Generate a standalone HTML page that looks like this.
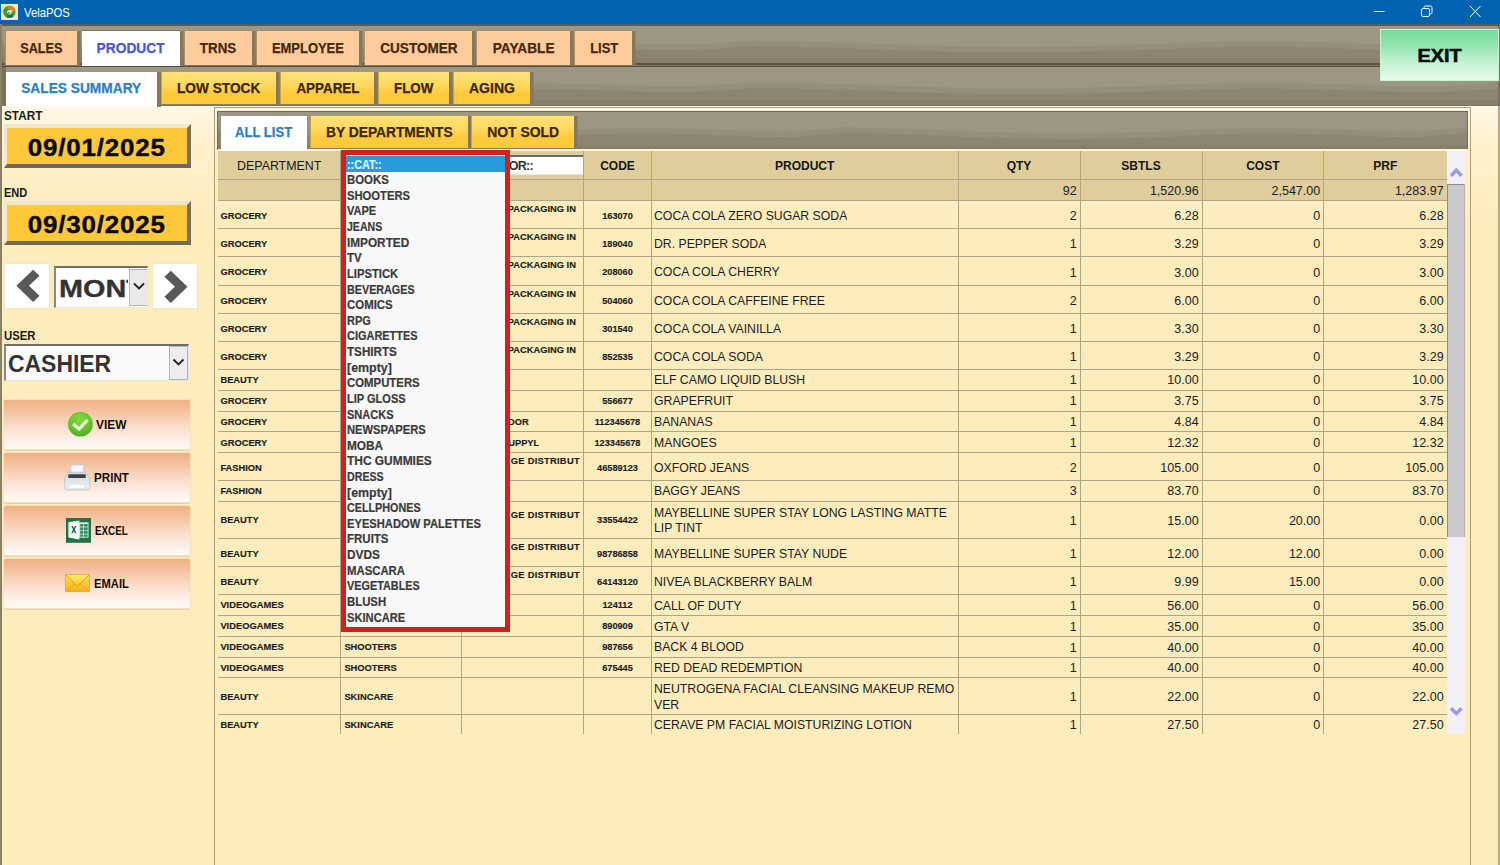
<!DOCTYPE html><html><head><meta charset="utf-8"><title>VelaPOS</title><style>
*{box-sizing:border-box;margin:0;padding:0}
html,body{width:1500px;height:865px;overflow:hidden;background:#FDECBC;font-family:"Liberation Sans",sans-serif;}
.a{position:absolute}
.sg{display:inline-block;font-weight:bold;-webkit-text-stroke:.25px currentColor;transform-origin:50% 50%;white-space:nowrap}
#title{left:0;top:0;width:1500px;height:24px;background:#0063B1}
.strip{background:#9D9684;overflow:hidden}
.tab{position:absolute;text-align:center;font-weight:bold;white-space:nowrap}
.t1{background:#FDCB9C;color:#47280A;box-shadow:3.500px 0 0 #86795B, 0 -1px 0 #A08E62, -1px 0 0 #A9966A;font-size:14px;line-height:34px;top:31px;height:34px}
.t2{background:linear-gradient(#FFE27C 0%,#FFD95F 40%,#FFCC40 65%,#FFC838 100%);color:#3C2606;box-shadow:3.500px 0 0 #86795B, 0 -1px 0 #B79C4E, -1px 0 0 #C9A445;font-size:14px}
.lbl{font-weight:bold;font-size:12px;color:#1a1a1a;white-space:nowrap;transform-origin:0 50%;transform:scaleX(.98)}
.datebtn{left:3.600px;width:187.500px;height:43.800px;background:#FFC83A;border-top:4px solid #EFE6D2;border-left:3.500px solid #F3E9CC;border-right:4.500px solid #787060;border-bottom:4px solid #706954;text-align:center;font-weight:bold;font-size:23.600px;line-height:41px;color:#0a0a0a;white-space:nowrap}
.datebtn span{display:inline-block;transform:scaleX(1.10);letter-spacing:.75px;-webkit-text-stroke:.4px #0a0a0a}
.obtn{left:4px;width:185.500px;height:49px;background:linear-gradient(#EFB083 0%,#F5C4A3 25%,#FAE0CF 58%,#FEF4EE 88%,#FFF9F4 100%);border-radius:1.500px;box-shadow:0 0 0 1px #F3E2BE, 0 2px 0 0 #E6D5AA}
.obtn .tx{position:absolute;top:0;line-height:50px;font-weight:bold;font-size:12.5px;color:#111;transform-origin:0 50%;transform:scaleX(.92);white-space:nowrap}
.cell{position:absolute;overflow:hidden;white-space:nowrap;color:#1c1c1c}
.b7{font-weight:bold;font-size:9.6px}
.r9{font-size:12.25px}
.num{text-align:right;font-size:12.5px}
.hl{position:absolute;height:1px;background:#AEA487;left:218px;width:1229px}
.vl{position:absolute;width:1px;background:#AEA487;top:151px;height:583px}
.dd{position:absolute;left:346.800px;font-weight:bold;-webkit-text-stroke:.2px currentColor;font-size:12px;color:#3b3b3b;white-space:nowrap;line-height:16px;height:16px}
</style></head><body>
<div class="a" id="title"></div>
<svg class="a" style="left:1px;top:4px" width="17" height="16" viewBox="0 0 17 16">
<rect x="0" y="0" width="17" height="16" fill="#F4E8BC"/>
<circle cx="8.300" cy="7.900" r="6.200" fill="#3F9A3B"/>
<path d="M6.500 2.000A6.200 6.200 0 0 1 14.400 6.800L10.800 8.600A2.800 2.800 0 0 0 7.000 5.200z" fill="#E87D25"/>
<path d="M5.800 13.500A6.200 6.200 0 0 0 12.500 12.400L10.300 9.800A2.600 2.600 0 0 1 6.800 10.600z" fill="#1E6E68"/>
<path d="M6.000 8.700a2.400 2.400 0 0 1 3.600-2.300l.9-1 .5 3.200-3.100-.2.900-.9a1.300 1.300 0 0 0-1.700 1.400z" fill="#F3F7EE"/>
<path d="M10.600 8.000a2.400 2.400 0 0 1-3.000 2.400l.4-1.000a1.300 1.300 0 0 0 1.500-1.300z" fill="#DCEFD8"/>
</svg>
<div class="a" style="left:23.500px;top:5px;font-size:12px;line-height:16px;color:#fff;transform-origin:0 50%;transform:scaleX(.94);white-space:nowrap">VelaPOS</div>
<svg class="a" style="left:1360px;top:0" width="140" height="24" viewBox="0 0 140 24" fill="none" stroke="#fff" stroke-width="1">
<path d="M14 11.5h10.5"/>
<rect x="61.5" y="8.5" width="8" height="8" rx="1.5"/><path d="M64 8.3v-.8a1.5 1.5 0 0 1 1.5-1.5h5a1.5 1.5 0 0 1 1.500 1.5v5a1.5 1.5 0 0 1-1.5 1.5h-.9"/>
<path d="M110 6l10.500 11M120.500 6l-10.500 11"/>
</svg>
<div class="a" style="left:0;top:24px;width:1500px;height:43px;background:#6B6452"></div>
<div class="a" style="left:0;top:24px;width:1500px;height:2px;background:#5C5A53"></div>
<div class="a strip" style="left:2px;top:26px;width:1498px;height:37px"><svg class="a" style="left:0;top:0" width="1498" height="37" viewBox="0 0 200 100" preserveAspectRatio="none"><path d="M0 40 C 15 42, 25 60, 40 56 S 60 38, 72 42 S 90 60, 100 40 C 115 42, 125 60, 140 56 S 160 38, 172 42 S 190 60, 200 40 L200 100 L0 100Z" fill="#958E7A"/><path d="M0 55 C 15 57, 25 75, 40 71 S 60 53, 72 57 S 90 75, 100 55 C 115 57, 125 75, 140 71 S 160 53, 172 57 S 190 75, 200 55 L200 100 L0 100Z" fill="#8C8571"/><rect x="0" y="88" width="200" height="12" fill="#857C67" fill-opacity=".6"/></svg></div>
<div class="a" style="left:2px;top:63px;width:1498px;height:2px;background:#5C5440"></div>
<div class="a" style="left:2px;top:65px;width:1498px;height:1px;background:#807862"></div>
<div class="a" style="left:2px;top:66px;width:1498px;height:1px;background:#554D3A"></div>
<div class="a strip" style="left:2px;top:67px;width:1498px;height:38px"><svg class="a" style="left:0;top:0" width="1498" height="38" viewBox="0 0 200 100" preserveAspectRatio="none"><path d="M0 40 C 15 42, 25 60, 40 56 S 60 38, 72 42 S 90 60, 100 40 C 115 42, 125 60, 140 56 S 160 38, 172 42 S 190 60, 200 40 L200 100 L0 100Z" fill="#958E7A"/><path d="M0 55 C 15 57, 25 75, 40 71 S 60 53, 72 57 S 90 75, 100 55 C 115 57, 125 75, 140 71 S 160 53, 172 57 S 190 75, 200 55 L200 100 L0 100Z" fill="#8C8571"/><rect x="0" y="88" width="200" height="12" fill="#857C67" fill-opacity=".6"/></svg></div>
<div class="a" style="left:0;top:24px;width:2px;height:841px;background:#8A7F69"></div>
<div class="a" style="left:2px;top:67px;width:4px;height:38px;background:#7A705B"></div>
<div class="tab t1" style="left:5.6px;width:71.4px"><span class="sg" style="transform:scaleX(0.908)">SALES</span></div>
<div class="tab" style="left:82.0px;width:98.0px;top:30.5px;height:35.5px;line-height:35px;background:#fff;color:#4A58C8;font-size:14px;box-shadow:3.500px 0 0 #86795B, 0 -1px 0 #7F7560"><span class="sg" style="transform:scaleX(0.982)">PRODUCT</span></div>
<div class="tab t1" style="left:185.0px;width:67.0px"><span class="sg" style="transform:scaleX(0.955)">TRNS</span></div>
<div class="tab t1" style="left:257.0px;width:102.0px"><span class="sg" style="transform:scaleX(0.926)">EMPLOYEE</span></div>
<div class="tab t1" style="left:365.0px;width:107.0px"><span class="sg" style="transform:scaleX(0.969)">CUSTOMER</span></div>
<div class="tab t1" style="left:477.0px;width:93.0px"><span class="sg" style="transform:scaleX(0.976)">PAYABLE</span></div>
<div class="tab t1" style="left:575.0px;width:57.4px"><span class="sg" style="transform:scaleX(0.923)">LIST</span></div>
<div class="tab" style="left:6.4px;width:150.6px;top:71.6px;height:35px;line-height:32.5px;background:#fff;color:#2D7DC3;font-size:14px;z-index:2;box-shadow:4px 0 0 #86795B"><span class="sg" style="transform:scaleX(0.981)">SALES SUMMARY</span></div>
<div class="tab t2" style="left:162.0px;width:114.0px;top:72.4px;height:32px;line-height:32px"><span class="sg" style="transform:scaleX(0.978)">LOW STOCK</span></div>
<div class="tab t2" style="left:281.0px;width:93.0px;top:72.4px;height:32px;line-height:32px"><span class="sg" style="transform:scaleX(0.957)">APPAREL</span></div>
<div class="tab t2" style="left:379.0px;width:70.0px;top:72.4px;height:32px;line-height:32px"><span class="sg" style="transform:scaleX(0.951)">FLOW</span></div>
<div class="tab t2" style="left:454.0px;width:76.0px;top:72.4px;height:32px;line-height:32px"><span class="sg" style="transform:scaleX(1.002)">AGING</span></div>
<div class="a" style="left:1380px;top:29px;width:119px;height:52px;z-index:3;background:linear-gradient(#74DD9B 0%,#92E4B0 30%,#C4F2D2 65%,#E8FBEC 100%);border:1.500px solid #C9F1D3;text-align:center;line-height:51px;font-size:18.500px;font-weight:bold;color:#0b0b0b"><span class="sg" style="transform:scaleX(1.07);-webkit-text-stroke:.6px #0b0b0b">EXIT</span></div>
<div class="a" style="left:2px;top:105px;width:1498px;height:1px;background:#7D735E"></div>
<div class="a" style="left:2px;top:106px;width:1498px;height:760px;background:linear-gradient(#FFF8E6 0px,#FEF0CB 40px,#FDECBC 120px)"></div>
<div class="a" style="left:214px;top:107px;width:1px;height:758px;background:#A99C7A"></div>
<div class="a" style="left:1470px;top:107px;width:1px;height:758px;background:#A99C7A"></div>
<div class="a" style="left:214px;top:107px;width:1257px;height:1px;background:#A8A080"></div>
<div class="a" style="left:215px;top:108px;width:1255px;height:2.500px;background:#FFF8E4"></div>
<div class="a" style="left:1498px;top:26px;width:2px;height:80px;background:#7A715C"></div>
<div class="a" style="left:1498px;top:106px;width:2px;height:759px;background:#B9AA7A"></div>
<div class="a lbl" style="left:4px;top:108px;line-height:16px">START</div>
<div class="a datebtn" style="top:123.900px"><span>09/01/2025</span></div>
<div class="a lbl" style="left:3.600px;top:185px;line-height:16px;transform:scaleX(.92)">END</div>
<div class="a datebtn" style="top:200.900px"><span>09/30/2025</span></div>
<div class="a" style="left:4.4px;top:263px;width:46px;height:46px;background:#fff;border:1px solid #F3E7C8"></div>
<svg class="a" style="left:4.400px;top:263px" width="46" height="46" viewBox="0 0 46 46"><path d="M12.400 22.800L29.100 6.700 35.500 12.800 25 22.800 35.500 32.800 29.100 38.900z" fill="#595959"/></svg>
<div class="a" style="left:54.4px;top:266.4px;width:94px;height:41.6px;background:#fff;border-top:2px solid #6e6e6e;border-left:2px solid #8a8a8a;border-right:1px solid #e6e6e6;border-bottom:1px solid #e6e6e6;overflow:hidden"><div style="position:absolute;left:2.600px;top:3px;font-size:24px;line-height:36px;font-weight:bold;color:#333;-webkit-text-stroke:.35px #333;white-space:nowrap;transform-origin:0 50%;transform:scaleX(1.2)">MONTH</div><div style="position:absolute;left:72px;top:0;width:21px;height:39px;background:#fff"></div><div style="position:absolute;left:72.500px;top:0.5px;width:19.500px;height:37.500px;background:#E9E9E9;border:1px solid #B4B4B4"></div><svg style="position:absolute;left:72.500px;top:0" width="20" height="38" viewBox="0 0 20 38"><path d="M5 15.500l5 5 5-5" fill="none" stroke="#222" stroke-width="1.800"/></svg></div>
<div class="a" style="left:152.4px;top:263px;width:46px;height:46px;background:#fff;border:1px solid #F3E7C8"></div>
<svg class="a" style="left:152.400px;top:263.800px" width="46" height="46" viewBox="0 0 46 46"><path d="M35.500 22.800L18.800 6.700 12.400 12.800 22.900 22.800 12.400 32.800 18.800 38.900z" fill="#595959"/></svg>
<div class="a lbl" style="left:3.600px;top:328px;line-height:16px;transform:scaleX(.945)">USER</div>
<div class="a" style="left:3.6px;top:343.6px;width:185.400px;height:37.400px;background:#FAFAFA;border-top:2px solid #6e6e6e;border-left:2px solid #8a8a8a;border-right:1px solid #e6e6e6;border-bottom:1px solid #e6e6e6;overflow:hidden"><div style="position:absolute;left:2px;top:1px;font-size:24px;line-height:34px;font-weight:bold;color:#333;white-space:nowrap;transform-origin:0 50%;transform:scaleX(.955)">CASHIER</div><div style="position:absolute;left:163.400px;top:0px;width:19px;height:34.500px;background:#EDEDED;border:1px solid #B4B4B4"></div><svg style="position:absolute;left:163.400px;top:0" width="19" height="34" viewBox="0 0 19 34"><path d="M4.500 13.500l5 5 5-5" fill="none" stroke="#222" stroke-width="1.800"/></svg></div>
<div class="a obtn" style="top:399.8px"></div>
<div class="a" style="left:96.3px;top:419.00px;font-size:12px;line-height:12px;font-weight:bold;color:#140c08;white-space:nowrap;transform-origin:0 50%;transform:scaleX(0.994)">VIEW</div>
<div class="a obtn" style="top:453.0px"></div>
<div class="a" style="left:93.6px;top:472.00px;font-size:12px;line-height:12px;font-weight:bold;color:#140c08;white-space:nowrap;transform-origin:0 50%;transform:scaleX(0.969)">PRINT</div>
<div class="a obtn" style="top:506.1px"></div>
<div class="a" style="left:94.8px;top:525.00px;font-size:12px;line-height:12px;font-weight:bold;color:#140c08;white-space:nowrap;transform-origin:0 50%;transform:scaleX(0.817)">EXCEL</div>
<div class="a obtn" style="top:559.3px"></div>
<div class="a" style="left:93.6px;top:578.00px;font-size:12px;line-height:12px;font-weight:bold;color:#140c08;white-space:nowrap;transform-origin:0 50%;transform:scaleX(0.935)">EMAIL</div>
<svg class="a" style="left:66px;top:410px" width="29" height="29" viewBox="0 0 29 29">
<defs><radialGradient id="gv" cx=".45" cy=".3" r=".75"><stop offset="0" stop-color="#84DA3C"/><stop offset=".65" stop-color="#62C02C"/><stop offset="1" stop-color="#4CA524"/></radialGradient></defs>
<circle cx="14.400" cy="14.200" r="12.400" fill="url(#gv)"/>
<path d="M7.200 14.000l5.800 5.000 8.600-9.200" fill="none" stroke="#ECFCD8" stroke-width="3.200" stroke-linecap="butt" stroke-linejoin="miter"/></svg>
<svg class="a" style="left:64px;top:464px" width="27" height="27" viewBox="0 0 27 27">
<defs><linearGradient id="gp" x1="0" y1="0" x2="0" y2="1"><stop offset="0" stop-color="#D4DAE0"/><stop offset="1" stop-color="#EEF0F3"/></linearGradient></defs>
<path d="M6.800 10.500V2.500l1.800-1.600h10.900v9.600z" fill="#F3F6FA" stroke="#C6CCD4" stroke-width=".7"/>
<path d="M4.500 8.200h17.200l3 4.500a3 3 0 0 1 1.200 2.400v8.300a2.400 2.400 0 0 1-2.400 2.400H3a2.400 2.400 0 0 1-2.400-2.400v-8.300a3 3 0 0 1 1.200-2.400z" fill="url(#gp)" stroke="#B4BAC2" stroke-width=".7"/>
<rect x="4.200" y="10.200" width="17.600" height="3.900" rx="1.200" fill="#3A4046"/>
<rect x="5" y="20.300" width="16" height="4.300" rx=".8" fill="#FBFCFD" stroke="#D5D9DE" stroke-width=".5"/></svg>
<svg class="a" style="left:65.800px;top:518.100px" width="25.200" height="24.800" viewBox="0 0 25.200 24.800">
<rect x="0" y="0" width="25.200" height="24.800" fill="#217346"/>
<rect x="13.200" y="4.300" width="9.300" height="15.400" fill="#D6F3E4"/>
<g fill="#3C8C62"><rect x="14.100" y="6.000" width="3.000" height="2.600"/><rect x="17.800" y="6.000" width="3.900" height="2.600"/><rect x="14.100" y="9.300" width="3.000" height="2.900"/><rect x="17.800" y="9.300" width="3.900" height="2.900"/><rect x="14.100" y="12.900" width="3.000" height="2.900"/><rect x="17.800" y="12.900" width="3.900" height="2.900"/><rect x="14.100" y="16.500" width="3.000" height="2.300"/><rect x="17.800" y="16.500" width="3.900" height="2.300"/></g>
<path d="M2.400 4.300L13.400 2.600V21.400L2.400 19.400z" fill="#F4FBF7"/>
<path d="M5.300 8.000h1.700l.9 2.200 1-2.200h1.600l-1.750 3.600 1.850 3.700H9.000l-1.100-2.400-1.050 2.400H5.200l1.850-3.700z" fill="#1E6B41"/></svg>
<svg class="a" style="left:64.600px;top:574.100px" width="25" height="18.200" viewBox="0 0 25 18.200">
<defs><linearGradient id="ge" x1="0" y1="0" x2="0" y2="1"><stop offset="0" stop-color="#FFE352"/><stop offset="1" stop-color="#F6B01E"/></linearGradient>
<linearGradient id="gf" x1="0" y1="0" x2="0" y2="1"><stop offset="0" stop-color="#FFEE6A"/><stop offset="1" stop-color="#FBC42C"/></linearGradient></defs>
<rect x=".4" y=".4" width="24.200" height="17.400" rx="1.200" fill="url(#ge)" stroke="#E2A21C" stroke-width=".8"/>
<path d="M1.200 17.200L10.500 9.300M23.800 17.200L14.500 9.300" stroke="#E5A31A" stroke-width=".9" fill="none"/>
<path d="M.8 1.000L12.300 12.300 23.900 1.000z" fill="url(#gf)"/>
<path d="M.8 1.000L12.300 12.300 23.900 1.000" fill="none" stroke="#DF9C16" stroke-width="1"/></svg>
<div class="a" style="left:216px;top:109px;width:1254px;height:1px;background:#fff8e0"></div>
<div class="a" style="left:217px;top:110.500px;width:1251.400px;height:39px;background:#6F6755"></div>
<div class="a strip" style="left:218.300px;top:111.800px;width:1249.100px;height:37.400px"><svg class="a" style="left:0;top:0" width="1250" height="38" viewBox="0 0 200 100" preserveAspectRatio="none"><path d="M0 40 C 15 42, 25 60, 40 56 S 60 38, 72 42 S 90 60, 100 40 C 115 42, 125 60, 140 56 S 160 38, 172 42 S 190 60, 200 40 L200 100 L0 100Z" fill="#958E7A"/><path d="M0 55 C 15 57, 25 75, 40 71 S 60 53, 72 57 S 90 75, 100 55 C 115 57, 125 75, 140 71 S 160 53, 172 57 S 190 75, 200 55 L200 100 L0 100Z" fill="#8C8571"/><rect x="0" y="88" width="200" height="12" fill="#857C67" fill-opacity=".6"/></svg></div>
<div class="a" style="left:218px;top:149px;width:1250px;height:2px;background:#FFF6DA"></div>
<div class="tab" style="left:221px;width:86px;top:116px;height:35px;line-height:33px;background:#fff;color:#2D7DC3;font-size:14px"><span class="sg" style="transform:scaleX(.932)">ALL LIST</span></div>
<div class="tab t2" style="left:311.0px;width:156.6px;top:116px;height:32px;line-height:32px"><span class="sg" style="transform:scaleX(0.984)">BY DEPARTMENTS</span></div>
<div class="tab t2" style="left:472.0px;width:102.0px;top:116px;height:32px;line-height:32px"><span class="sg" style="transform:scaleX(0.995)">NOT SOLD</span></div>
<div class="a" style="left:218px;top:151px;width:1229px;height:49.500px;background:#DFCE9B"></div>
<div class="cell" style="left:218.0px;width:122.4px;top:151px;height:28px;line-height:30.5px;text-align:center;font-size:12.4px;font-weight:normal;color:#161616">DEPARTMENT</div>
<div class="cell" style="left:583.6px;width:67.8px;top:151px;height:28px;line-height:30.5px;text-align:center;font-size:12px;font-weight:bold;color:#161616">CODE</div>
<div class="cell" style="left:651.4px;width:306.6px;top:151px;height:28px;line-height:30.5px;text-align:center;font-size:12px;font-weight:bold;color:#161616">PRODUCT</div>
<div class="cell" style="left:958.0px;width:122.0px;top:151px;height:28px;line-height:30.5px;text-align:center;font-size:12px;font-weight:bold;color:#161616">QTY</div>
<div class="cell" style="left:1080.0px;width:122.0px;top:151px;height:28px;line-height:30.5px;text-align:center;font-size:12px;font-weight:bold;color:#161616">SBTLS</div>
<div class="cell" style="left:1202.0px;width:121.6px;top:151px;height:28px;line-height:30.5px;text-align:center;font-size:12px;font-weight:bold;color:#161616">COST</div>
<div class="cell" style="left:1323.6px;width:123.4px;top:151px;height:28px;line-height:30.5px;text-align:center;font-size:12px;font-weight:bold;color:#161616">PRF</div>
<div class="a" style="left:463px;top:155px;width:120px;height:20px;background:#fff;border-top:2px solid #6b6b6b;border-left:1px solid #999;border-bottom:1px solid #e4e4e4"><div style="position:absolute;left:5.9px;top:0;line-height:18px;font-size:12.5px;font-weight:bold;color:#333;letter-spacing:-.7px;white-space:nowrap">::VENDOR::</div></div>
<div class="cell" style="left:958.00px;top:184.75px;font-size:12.5px;line-height:12.5px;height:15.0px;color:#1c1c1c;width:118.60px;text-align:right;">92</div>
<div class="cell" style="left:1080.00px;top:184.75px;font-size:12.5px;line-height:12.5px;height:15.0px;color:#1c1c1c;width:118.60px;text-align:right;">1,520.96</div>
<div class="cell" style="left:1202.00px;top:184.75px;font-size:12.5px;line-height:12.5px;height:15.0px;color:#1c1c1c;width:118.20px;text-align:right;">2,547.00</div>
<div class="cell" style="left:1323.60px;top:184.75px;font-size:12.5px;line-height:12.5px;height:15.0px;color:#1c1c1c;width:120.00px;text-align:right;">1,283.97</div>
<div class="cell" style="left:220.40px;top:212.34px;font-size:9.33px;line-height:9.33px;height:11.2px;color:#1c1c1c;font-weight:bold;-webkit-text-stroke:.15px #1c1c1c;">GROCERY</div>
<div class="cell" style="left:344.40px;top:212.34px;font-size:9.33px;line-height:9.33px;height:11.2px;color:#1c1c1c;font-weight:bold;-webkit-text-stroke:.15px #1c1c1c;">IMPORTED</div>
<div class="cell" style="left:507.70px;top:205.34px;font-size:9.33px;line-height:9.33px;height:11.2px;color:#1c1c1c;font-weight:bold;-webkit-text-stroke:.15px #1c1c1c;">PACKAGING IN</div>
<div class="cell" style="left:583.60px;top:212.40px;font-size:9.2px;line-height:9.2px;height:11.0px;color:#1c1c1c;font-weight:bold;-webkit-text-stroke:.15px #1c1c1c;width:67.80px;text-align:center;">163070</div>
<div class="cell" style="left:654.00px;top:209.88px;font-size:12.25px;line-height:12.25px;height:14.7px;color:#1c1c1c;">COCA COLA ZERO SUGAR SODA</div>
<div class="cell" style="left:958.00px;top:209.75px;font-size:12.5px;line-height:12.5px;height:15.0px;color:#1c1c1c;width:118.60px;text-align:right;">2</div>
<div class="cell" style="left:1080.00px;top:209.75px;font-size:12.5px;line-height:12.5px;height:15.0px;color:#1c1c1c;width:118.60px;text-align:right;">6.28</div>
<div class="cell" style="left:1202.00px;top:209.75px;font-size:12.5px;line-height:12.5px;height:15.0px;color:#1c1c1c;width:118.20px;text-align:right;">0</div>
<div class="cell" style="left:1323.60px;top:209.75px;font-size:12.5px;line-height:12.5px;height:15.0px;color:#1c1c1c;width:120.00px;text-align:right;">6.28</div>
<div class="cell" style="left:220.40px;top:240.34px;font-size:9.33px;line-height:9.33px;height:11.2px;color:#1c1c1c;font-weight:bold;-webkit-text-stroke:.15px #1c1c1c;">GROCERY</div>
<div class="cell" style="left:344.40px;top:240.34px;font-size:9.33px;line-height:9.33px;height:11.2px;color:#1c1c1c;font-weight:bold;-webkit-text-stroke:.15px #1c1c1c;">IMPORTED</div>
<div class="cell" style="left:507.70px;top:233.34px;font-size:9.33px;line-height:9.33px;height:11.2px;color:#1c1c1c;font-weight:bold;-webkit-text-stroke:.15px #1c1c1c;">PACKAGING IN</div>
<div class="cell" style="left:583.60px;top:240.40px;font-size:9.2px;line-height:9.2px;height:11.0px;color:#1c1c1c;font-weight:bold;-webkit-text-stroke:.15px #1c1c1c;width:67.80px;text-align:center;">189040</div>
<div class="cell" style="left:654.00px;top:237.88px;font-size:12.25px;line-height:12.25px;height:14.7px;color:#1c1c1c;">DR. PEPPER SODA</div>
<div class="cell" style="left:958.00px;top:237.75px;font-size:12.5px;line-height:12.5px;height:15.0px;color:#1c1c1c;width:118.60px;text-align:right;">1</div>
<div class="cell" style="left:1080.00px;top:237.75px;font-size:12.5px;line-height:12.5px;height:15.0px;color:#1c1c1c;width:118.60px;text-align:right;">3.29</div>
<div class="cell" style="left:1202.00px;top:237.75px;font-size:12.5px;line-height:12.5px;height:15.0px;color:#1c1c1c;width:118.20px;text-align:right;">0</div>
<div class="cell" style="left:1323.60px;top:237.75px;font-size:12.5px;line-height:12.5px;height:15.0px;color:#1c1c1c;width:120.00px;text-align:right;">3.29</div>
<div class="cell" style="left:220.40px;top:268.33px;font-size:9.33px;line-height:9.33px;height:11.2px;color:#1c1c1c;font-weight:bold;-webkit-text-stroke:.15px #1c1c1c;">GROCERY</div>
<div class="cell" style="left:344.40px;top:268.33px;font-size:9.33px;line-height:9.33px;height:11.2px;color:#1c1c1c;font-weight:bold;-webkit-text-stroke:.15px #1c1c1c;">IMPORTED</div>
<div class="cell" style="left:507.70px;top:261.33px;font-size:9.33px;line-height:9.33px;height:11.2px;color:#1c1c1c;font-weight:bold;-webkit-text-stroke:.15px #1c1c1c;">PACKAGING IN</div>
<div class="cell" style="left:583.60px;top:268.40px;font-size:9.2px;line-height:9.2px;height:11.0px;color:#1c1c1c;font-weight:bold;-webkit-text-stroke:.15px #1c1c1c;width:67.80px;text-align:center;">208060</div>
<div class="cell" style="left:654.00px;top:265.88px;font-size:12.25px;line-height:12.25px;height:14.7px;color:#1c1c1c;">COCA COLA CHERRY</div>
<div class="cell" style="left:958.00px;top:266.75px;font-size:12.5px;line-height:12.5px;height:15.0px;color:#1c1c1c;width:118.60px;text-align:right;">1</div>
<div class="cell" style="left:1080.00px;top:266.75px;font-size:12.5px;line-height:12.5px;height:15.0px;color:#1c1c1c;width:118.60px;text-align:right;">3.00</div>
<div class="cell" style="left:1202.00px;top:266.75px;font-size:12.5px;line-height:12.5px;height:15.0px;color:#1c1c1c;width:118.20px;text-align:right;">0</div>
<div class="cell" style="left:1323.60px;top:266.75px;font-size:12.5px;line-height:12.5px;height:15.0px;color:#1c1c1c;width:120.00px;text-align:right;">3.00</div>
<div class="cell" style="left:220.40px;top:297.33px;font-size:9.33px;line-height:9.33px;height:11.2px;color:#1c1c1c;font-weight:bold;-webkit-text-stroke:.15px #1c1c1c;">GROCERY</div>
<div class="cell" style="left:344.40px;top:297.33px;font-size:9.33px;line-height:9.33px;height:11.2px;color:#1c1c1c;font-weight:bold;-webkit-text-stroke:.15px #1c1c1c;">IMPORTED</div>
<div class="cell" style="left:507.70px;top:290.33px;font-size:9.33px;line-height:9.33px;height:11.2px;color:#1c1c1c;font-weight:bold;-webkit-text-stroke:.15px #1c1c1c;">PACKAGING IN</div>
<div class="cell" style="left:583.60px;top:297.40px;font-size:9.2px;line-height:9.2px;height:11.0px;color:#1c1c1c;font-weight:bold;-webkit-text-stroke:.15px #1c1c1c;width:67.80px;text-align:center;">504060</div>
<div class="cell" style="left:654.00px;top:294.88px;font-size:12.25px;line-height:12.25px;height:14.7px;color:#1c1c1c;">COCA COLA CAFFEINE FREE</div>
<div class="cell" style="left:958.00px;top:294.75px;font-size:12.5px;line-height:12.5px;height:15.0px;color:#1c1c1c;width:118.60px;text-align:right;">2</div>
<div class="cell" style="left:1080.00px;top:294.75px;font-size:12.5px;line-height:12.5px;height:15.0px;color:#1c1c1c;width:118.60px;text-align:right;">6.00</div>
<div class="cell" style="left:1202.00px;top:294.75px;font-size:12.5px;line-height:12.5px;height:15.0px;color:#1c1c1c;width:118.20px;text-align:right;">0</div>
<div class="cell" style="left:1323.60px;top:294.75px;font-size:12.5px;line-height:12.5px;height:15.0px;color:#1c1c1c;width:120.00px;text-align:right;">6.00</div>
<div class="cell" style="left:220.40px;top:325.33px;font-size:9.33px;line-height:9.33px;height:11.2px;color:#1c1c1c;font-weight:bold;-webkit-text-stroke:.15px #1c1c1c;">GROCERY</div>
<div class="cell" style="left:344.40px;top:325.33px;font-size:9.33px;line-height:9.33px;height:11.2px;color:#1c1c1c;font-weight:bold;-webkit-text-stroke:.15px #1c1c1c;">IMPORTED</div>
<div class="cell" style="left:507.70px;top:318.33px;font-size:9.33px;line-height:9.33px;height:11.2px;color:#1c1c1c;font-weight:bold;-webkit-text-stroke:.15px #1c1c1c;">PACKAGING IN</div>
<div class="cell" style="left:583.60px;top:325.40px;font-size:9.2px;line-height:9.2px;height:11.0px;color:#1c1c1c;font-weight:bold;-webkit-text-stroke:.15px #1c1c1c;width:67.80px;text-align:center;">301540</div>
<div class="cell" style="left:654.00px;top:322.88px;font-size:12.25px;line-height:12.25px;height:14.7px;color:#1c1c1c;">COCA COLA VAINILLA</div>
<div class="cell" style="left:958.00px;top:322.75px;font-size:12.5px;line-height:12.5px;height:15.0px;color:#1c1c1c;width:118.60px;text-align:right;">1</div>
<div class="cell" style="left:1080.00px;top:322.75px;font-size:12.5px;line-height:12.5px;height:15.0px;color:#1c1c1c;width:118.60px;text-align:right;">3.30</div>
<div class="cell" style="left:1202.00px;top:322.75px;font-size:12.5px;line-height:12.5px;height:15.0px;color:#1c1c1c;width:118.20px;text-align:right;">0</div>
<div class="cell" style="left:1323.60px;top:322.75px;font-size:12.5px;line-height:12.5px;height:15.0px;color:#1c1c1c;width:120.00px;text-align:right;">3.30</div>
<div class="cell" style="left:220.40px;top:353.33px;font-size:9.33px;line-height:9.33px;height:11.2px;color:#1c1c1c;font-weight:bold;-webkit-text-stroke:.15px #1c1c1c;">GROCERY</div>
<div class="cell" style="left:344.40px;top:353.33px;font-size:9.33px;line-height:9.33px;height:11.2px;color:#1c1c1c;font-weight:bold;-webkit-text-stroke:.15px #1c1c1c;">IMPORTED</div>
<div class="cell" style="left:507.70px;top:346.33px;font-size:9.33px;line-height:9.33px;height:11.2px;color:#1c1c1c;font-weight:bold;-webkit-text-stroke:.15px #1c1c1c;">PACKAGING IN</div>
<div class="cell" style="left:583.60px;top:353.40px;font-size:9.2px;line-height:9.2px;height:11.0px;color:#1c1c1c;font-weight:bold;-webkit-text-stroke:.15px #1c1c1c;width:67.80px;text-align:center;">852535</div>
<div class="cell" style="left:654.00px;top:350.88px;font-size:12.25px;line-height:12.25px;height:14.7px;color:#1c1c1c;">COCA COLA SODA</div>
<div class="cell" style="left:958.00px;top:350.75px;font-size:12.5px;line-height:12.5px;height:15.0px;color:#1c1c1c;width:118.60px;text-align:right;">1</div>
<div class="cell" style="left:1080.00px;top:350.75px;font-size:12.5px;line-height:12.5px;height:15.0px;color:#1c1c1c;width:118.60px;text-align:right;">3.29</div>
<div class="cell" style="left:1202.00px;top:350.75px;font-size:12.5px;line-height:12.5px;height:15.0px;color:#1c1c1c;width:118.20px;text-align:right;">0</div>
<div class="cell" style="left:1323.60px;top:350.75px;font-size:12.5px;line-height:12.5px;height:15.0px;color:#1c1c1c;width:120.00px;text-align:right;">3.29</div>
<div class="cell" style="left:220.40px;top:376.33px;font-size:9.33px;line-height:9.33px;height:11.2px;color:#1c1c1c;font-weight:bold;-webkit-text-stroke:.15px #1c1c1c;">BEAUTY</div>
<div class="cell" style="left:344.40px;top:376.33px;font-size:9.33px;line-height:9.33px;height:11.2px;color:#1c1c1c;font-weight:bold;-webkit-text-stroke:.15px #1c1c1c;">BLUSH</div>
<div class="cell" style="left:583.60px;top:376.40px;font-size:9.2px;line-height:9.2px;height:11.0px;color:#1c1c1c;font-weight:bold;-webkit-text-stroke:.15px #1c1c1c;width:67.80px;text-align:center;"></div>
<div class="cell" style="left:654.00px;top:373.88px;font-size:12.25px;line-height:12.25px;height:14.7px;color:#1c1c1c;">ELF CAMO LIQUID BLUSH</div>
<div class="cell" style="left:958.00px;top:373.75px;font-size:12.5px;line-height:12.5px;height:15.0px;color:#1c1c1c;width:118.60px;text-align:right;">1</div>
<div class="cell" style="left:1080.00px;top:373.75px;font-size:12.5px;line-height:12.5px;height:15.0px;color:#1c1c1c;width:118.60px;text-align:right;">10.00</div>
<div class="cell" style="left:1202.00px;top:373.75px;font-size:12.5px;line-height:12.5px;height:15.0px;color:#1c1c1c;width:118.20px;text-align:right;">0</div>
<div class="cell" style="left:1323.60px;top:373.75px;font-size:12.5px;line-height:12.5px;height:15.0px;color:#1c1c1c;width:120.00px;text-align:right;">10.00</div>
<div class="cell" style="left:220.40px;top:397.33px;font-size:9.33px;line-height:9.33px;height:11.2px;color:#1c1c1c;font-weight:bold;-webkit-text-stroke:.15px #1c1c1c;">GROCERY</div>
<div class="cell" style="left:344.40px;top:397.33px;font-size:9.33px;line-height:9.33px;height:11.2px;color:#1c1c1c;font-weight:bold;-webkit-text-stroke:.15px #1c1c1c;">FRUITS</div>
<div class="cell" style="left:583.60px;top:397.40px;font-size:9.2px;line-height:9.2px;height:11.0px;color:#1c1c1c;font-weight:bold;-webkit-text-stroke:.15px #1c1c1c;width:67.80px;text-align:center;">556677</div>
<div class="cell" style="left:654.00px;top:394.88px;font-size:12.25px;line-height:12.25px;height:14.7px;color:#1c1c1c;">GRAPEFRUIT</div>
<div class="cell" style="left:958.00px;top:394.75px;font-size:12.5px;line-height:12.5px;height:15.0px;color:#1c1c1c;width:118.60px;text-align:right;">1</div>
<div class="cell" style="left:1080.00px;top:394.75px;font-size:12.5px;line-height:12.5px;height:15.0px;color:#1c1c1c;width:118.60px;text-align:right;">3.75</div>
<div class="cell" style="left:1202.00px;top:394.75px;font-size:12.5px;line-height:12.5px;height:15.0px;color:#1c1c1c;width:118.20px;text-align:right;">0</div>
<div class="cell" style="left:1323.60px;top:394.75px;font-size:12.5px;line-height:12.5px;height:15.0px;color:#1c1c1c;width:120.00px;text-align:right;">3.75</div>
<div class="cell" style="left:220.40px;top:418.33px;font-size:9.33px;line-height:9.33px;height:11.2px;color:#1c1c1c;font-weight:bold;-webkit-text-stroke:.15px #1c1c1c;">GROCERY</div>
<div class="cell" style="left:344.40px;top:418.33px;font-size:9.33px;line-height:9.33px;height:11.2px;color:#1c1c1c;font-weight:bold;-webkit-text-stroke:.15px #1c1c1c;">FRUITS</div>
<div class="cell" style="left:508.00px;top:418.33px;font-size:9.33px;line-height:9.33px;height:11.2px;color:#1c1c1c;font-weight:bold;-webkit-text-stroke:.15px #1c1c1c;">DOR</div>
<div class="cell" style="left:583.60px;top:418.40px;font-size:9.2px;line-height:9.2px;height:11.0px;color:#1c1c1c;font-weight:bold;-webkit-text-stroke:.15px #1c1c1c;width:67.80px;text-align:center;">112345678</div>
<div class="cell" style="left:654.00px;top:415.88px;font-size:12.25px;line-height:12.25px;height:14.7px;color:#1c1c1c;">BANANAS</div>
<div class="cell" style="left:958.00px;top:415.75px;font-size:12.5px;line-height:12.5px;height:15.0px;color:#1c1c1c;width:118.60px;text-align:right;">1</div>
<div class="cell" style="left:1080.00px;top:415.75px;font-size:12.5px;line-height:12.5px;height:15.0px;color:#1c1c1c;width:118.60px;text-align:right;">4.84</div>
<div class="cell" style="left:1202.00px;top:415.75px;font-size:12.5px;line-height:12.5px;height:15.0px;color:#1c1c1c;width:118.20px;text-align:right;">0</div>
<div class="cell" style="left:1323.60px;top:415.75px;font-size:12.5px;line-height:12.5px;height:15.0px;color:#1c1c1c;width:120.00px;text-align:right;">4.84</div>
<div class="cell" style="left:220.40px;top:439.33px;font-size:9.33px;line-height:9.33px;height:11.2px;color:#1c1c1c;font-weight:bold;-webkit-text-stroke:.15px #1c1c1c;">GROCERY</div>
<div class="cell" style="left:344.40px;top:439.33px;font-size:9.33px;line-height:9.33px;height:11.2px;color:#1c1c1c;font-weight:bold;-webkit-text-stroke:.15px #1c1c1c;">FRUITS</div>
<div class="cell" style="left:508.20px;top:439.33px;font-size:9.33px;line-height:9.33px;height:11.2px;color:#1c1c1c;font-weight:bold;-webkit-text-stroke:.15px #1c1c1c;">UPPYL</div>
<div class="cell" style="left:583.60px;top:439.40px;font-size:9.2px;line-height:9.2px;height:11.0px;color:#1c1c1c;font-weight:bold;-webkit-text-stroke:.15px #1c1c1c;width:67.80px;text-align:center;">123345678</div>
<div class="cell" style="left:654.00px;top:436.88px;font-size:12.25px;line-height:12.25px;height:14.7px;color:#1c1c1c;">MANGOES</div>
<div class="cell" style="left:958.00px;top:436.75px;font-size:12.5px;line-height:12.5px;height:15.0px;color:#1c1c1c;width:118.60px;text-align:right;">1</div>
<div class="cell" style="left:1080.00px;top:436.75px;font-size:12.5px;line-height:12.5px;height:15.0px;color:#1c1c1c;width:118.60px;text-align:right;">12.32</div>
<div class="cell" style="left:1202.00px;top:436.75px;font-size:12.5px;line-height:12.5px;height:15.0px;color:#1c1c1c;width:118.20px;text-align:right;">0</div>
<div class="cell" style="left:1323.60px;top:436.75px;font-size:12.5px;line-height:12.5px;height:15.0px;color:#1c1c1c;width:120.00px;text-align:right;">12.32</div>
<div class="cell" style="left:220.40px;top:464.33px;font-size:9.33px;line-height:9.33px;height:11.2px;color:#1c1c1c;font-weight:bold;-webkit-text-stroke:.15px #1c1c1c;">FASHION</div>
<div class="cell" style="left:344.40px;top:464.33px;font-size:9.33px;line-height:9.33px;height:11.2px;color:#1c1c1c;font-weight:bold;-webkit-text-stroke:.15px #1c1c1c;">JEANS</div>
<div class="cell" style="left:510.80px;top:457.33px;font-size:9.33px;line-height:9.33px;height:11.2px;color:#1c1c1c;font-weight:bold;-webkit-text-stroke:.15px #1c1c1c;letter-spacing:.27px;">GE DISTRIBUT</div>
<div class="cell" style="left:583.60px;top:464.40px;font-size:9.2px;line-height:9.2px;height:11.0px;color:#1c1c1c;font-weight:bold;-webkit-text-stroke:.15px #1c1c1c;width:67.80px;text-align:center;">46589123</div>
<div class="cell" style="left:654.00px;top:461.88px;font-size:12.25px;line-height:12.25px;height:14.7px;color:#1c1c1c;">OXFORD JEANS</div>
<div class="cell" style="left:958.00px;top:461.75px;font-size:12.5px;line-height:12.5px;height:15.0px;color:#1c1c1c;width:118.60px;text-align:right;">2</div>
<div class="cell" style="left:1080.00px;top:461.75px;font-size:12.5px;line-height:12.5px;height:15.0px;color:#1c1c1c;width:118.60px;text-align:right;">105.00</div>
<div class="cell" style="left:1202.00px;top:461.75px;font-size:12.5px;line-height:12.5px;height:15.0px;color:#1c1c1c;width:118.20px;text-align:right;">0</div>
<div class="cell" style="left:1323.60px;top:461.75px;font-size:12.5px;line-height:12.5px;height:15.0px;color:#1c1c1c;width:120.00px;text-align:right;">105.00</div>
<div class="cell" style="left:220.40px;top:487.33px;font-size:9.33px;line-height:9.33px;height:11.2px;color:#1c1c1c;font-weight:bold;-webkit-text-stroke:.15px #1c1c1c;">FASHION</div>
<div class="cell" style="left:344.40px;top:487.33px;font-size:9.33px;line-height:9.33px;height:11.2px;color:#1c1c1c;font-weight:bold;-webkit-text-stroke:.15px #1c1c1c;">JEANS</div>
<div class="cell" style="left:583.60px;top:487.40px;font-size:9.2px;line-height:9.2px;height:11.0px;color:#1c1c1c;font-weight:bold;-webkit-text-stroke:.15px #1c1c1c;width:67.80px;text-align:center;"></div>
<div class="cell" style="left:654.00px;top:484.88px;font-size:12.25px;line-height:12.25px;height:14.7px;color:#1c1c1c;">BAGGY JEANS</div>
<div class="cell" style="left:958.00px;top:484.75px;font-size:12.5px;line-height:12.5px;height:15.0px;color:#1c1c1c;width:118.60px;text-align:right;">3</div>
<div class="cell" style="left:1080.00px;top:484.75px;font-size:12.5px;line-height:12.5px;height:15.0px;color:#1c1c1c;width:118.60px;text-align:right;">83.70</div>
<div class="cell" style="left:1202.00px;top:484.75px;font-size:12.5px;line-height:12.5px;height:15.0px;color:#1c1c1c;width:118.20px;text-align:right;">0</div>
<div class="cell" style="left:1323.60px;top:484.75px;font-size:12.5px;line-height:12.5px;height:15.0px;color:#1c1c1c;width:120.00px;text-align:right;">83.70</div>
<div class="cell" style="left:220.40px;top:516.34px;font-size:9.33px;line-height:9.33px;height:11.2px;color:#1c1c1c;font-weight:bold;-webkit-text-stroke:.15px #1c1c1c;">BEAUTY</div>
<div class="cell" style="left:344.40px;top:516.34px;font-size:9.33px;line-height:9.33px;height:11.2px;color:#1c1c1c;font-weight:bold;-webkit-text-stroke:.15px #1c1c1c;">LIPSTICK</div>
<div class="cell" style="left:510.80px;top:511.34px;font-size:9.33px;line-height:9.33px;height:11.2px;color:#1c1c1c;font-weight:bold;-webkit-text-stroke:.15px #1c1c1c;letter-spacing:.27px;">GE DISTRIBUT</div>
<div class="cell" style="left:583.60px;top:516.40px;font-size:9.2px;line-height:9.2px;height:11.0px;color:#1c1c1c;font-weight:bold;-webkit-text-stroke:.15px #1c1c1c;width:67.80px;text-align:center;">33554422</div>
<div class="cell" style="left:654.00px;top:506.88px;font-size:12.25px;line-height:12.25px;height:14.7px;color:#1c1c1c;">MAYBELLINE SUPER STAY LONG LASTING MATTE</div>
<div class="cell" style="left:654.00px;top:521.88px;font-size:12.25px;line-height:12.25px;height:14.7px;color:#1c1c1c;">LIP TINT</div>
<div class="cell" style="left:958.00px;top:514.75px;font-size:12.5px;line-height:12.5px;height:15.0px;color:#1c1c1c;width:118.60px;text-align:right;">1</div>
<div class="cell" style="left:1080.00px;top:514.75px;font-size:12.5px;line-height:12.5px;height:15.0px;color:#1c1c1c;width:118.60px;text-align:right;">15.00</div>
<div class="cell" style="left:1202.00px;top:514.75px;font-size:12.5px;line-height:12.5px;height:15.0px;color:#1c1c1c;width:118.20px;text-align:right;">20.00</div>
<div class="cell" style="left:1323.60px;top:514.75px;font-size:12.5px;line-height:12.5px;height:15.0px;color:#1c1c1c;width:120.00px;text-align:right;">0.00</div>
<div class="cell" style="left:220.40px;top:550.34px;font-size:9.33px;line-height:9.33px;height:11.2px;color:#1c1c1c;font-weight:bold;-webkit-text-stroke:.15px #1c1c1c;">BEAUTY</div>
<div class="cell" style="left:344.40px;top:550.34px;font-size:9.33px;line-height:9.33px;height:11.2px;color:#1c1c1c;font-weight:bold;-webkit-text-stroke:.15px #1c1c1c;">LIPSTICK</div>
<div class="cell" style="left:510.80px;top:543.34px;font-size:9.33px;line-height:9.33px;height:11.2px;color:#1c1c1c;font-weight:bold;-webkit-text-stroke:.15px #1c1c1c;letter-spacing:.27px;">GE DISTRIBUT</div>
<div class="cell" style="left:583.60px;top:550.40px;font-size:9.2px;line-height:9.2px;height:11.0px;color:#1c1c1c;font-weight:bold;-webkit-text-stroke:.15px #1c1c1c;width:67.80px;text-align:center;">98786858</div>
<div class="cell" style="left:654.00px;top:547.88px;font-size:12.25px;line-height:12.25px;height:14.7px;color:#1c1c1c;">MAYBELLINE SUPER STAY NUDE</div>
<div class="cell" style="left:958.00px;top:547.75px;font-size:12.5px;line-height:12.5px;height:15.0px;color:#1c1c1c;width:118.60px;text-align:right;">1</div>
<div class="cell" style="left:1080.00px;top:547.75px;font-size:12.5px;line-height:12.5px;height:15.0px;color:#1c1c1c;width:118.60px;text-align:right;">12.00</div>
<div class="cell" style="left:1202.00px;top:547.75px;font-size:12.5px;line-height:12.5px;height:15.0px;color:#1c1c1c;width:118.20px;text-align:right;">12.00</div>
<div class="cell" style="left:1323.60px;top:547.75px;font-size:12.5px;line-height:12.5px;height:15.0px;color:#1c1c1c;width:120.00px;text-align:right;">0.00</div>
<div class="cell" style="left:220.40px;top:578.34px;font-size:9.33px;line-height:9.33px;height:11.2px;color:#1c1c1c;font-weight:bold;-webkit-text-stroke:.15px #1c1c1c;">BEAUTY</div>
<div class="cell" style="left:344.40px;top:578.34px;font-size:9.33px;line-height:9.33px;height:11.2px;color:#1c1c1c;font-weight:bold;-webkit-text-stroke:.15px #1c1c1c;">LIPSTICK</div>
<div class="cell" style="left:510.80px;top:571.34px;font-size:9.33px;line-height:9.33px;height:11.2px;color:#1c1c1c;font-weight:bold;-webkit-text-stroke:.15px #1c1c1c;letter-spacing:.27px;">GE DISTRIBUT</div>
<div class="cell" style="left:583.60px;top:578.40px;font-size:9.2px;line-height:9.2px;height:11.0px;color:#1c1c1c;font-weight:bold;-webkit-text-stroke:.15px #1c1c1c;width:67.80px;text-align:center;">64143120</div>
<div class="cell" style="left:654.00px;top:575.88px;font-size:12.25px;line-height:12.25px;height:14.7px;color:#1c1c1c;">NIVEA BLACKBERRY BALM</div>
<div class="cell" style="left:958.00px;top:575.75px;font-size:12.5px;line-height:12.5px;height:15.0px;color:#1c1c1c;width:118.60px;text-align:right;">1</div>
<div class="cell" style="left:1080.00px;top:575.75px;font-size:12.5px;line-height:12.5px;height:15.0px;color:#1c1c1c;width:118.60px;text-align:right;">9.99</div>
<div class="cell" style="left:1202.00px;top:575.75px;font-size:12.5px;line-height:12.5px;height:15.0px;color:#1c1c1c;width:118.20px;text-align:right;">15.00</div>
<div class="cell" style="left:1323.60px;top:575.75px;font-size:12.5px;line-height:12.5px;height:15.0px;color:#1c1c1c;width:120.00px;text-align:right;">0.00</div>
<div class="cell" style="left:220.40px;top:601.34px;font-size:9.33px;line-height:9.33px;height:11.2px;color:#1c1c1c;font-weight:bold;-webkit-text-stroke:.15px #1c1c1c;">VIDEOGAMES</div>
<div class="cell" style="left:344.40px;top:601.34px;font-size:9.33px;line-height:9.33px;height:11.2px;color:#1c1c1c;font-weight:bold;-webkit-text-stroke:.15px #1c1c1c;">SHOOTERS</div>
<div class="cell" style="left:583.60px;top:601.40px;font-size:9.2px;line-height:9.2px;height:11.0px;color:#1c1c1c;font-weight:bold;-webkit-text-stroke:.15px #1c1c1c;width:67.80px;text-align:center;">124112</div>
<div class="cell" style="left:654.00px;top:599.88px;font-size:12.25px;line-height:12.25px;height:14.7px;color:#1c1c1c;">CALL OF DUTY</div>
<div class="cell" style="left:958.00px;top:599.75px;font-size:12.5px;line-height:12.5px;height:15.0px;color:#1c1c1c;width:118.60px;text-align:right;">1</div>
<div class="cell" style="left:1080.00px;top:599.75px;font-size:12.5px;line-height:12.5px;height:15.0px;color:#1c1c1c;width:118.60px;text-align:right;">56.00</div>
<div class="cell" style="left:1202.00px;top:599.75px;font-size:12.5px;line-height:12.5px;height:15.0px;color:#1c1c1c;width:118.20px;text-align:right;">0</div>
<div class="cell" style="left:1323.60px;top:599.75px;font-size:12.5px;line-height:12.5px;height:15.0px;color:#1c1c1c;width:120.00px;text-align:right;">56.00</div>
<div class="cell" style="left:220.40px;top:622.34px;font-size:9.33px;line-height:9.33px;height:11.2px;color:#1c1c1c;font-weight:bold;-webkit-text-stroke:.15px #1c1c1c;">VIDEOGAMES</div>
<div class="cell" style="left:344.40px;top:622.34px;font-size:9.33px;line-height:9.33px;height:11.2px;color:#1c1c1c;font-weight:bold;-webkit-text-stroke:.15px #1c1c1c;">RPG</div>
<div class="cell" style="left:583.60px;top:622.40px;font-size:9.2px;line-height:9.2px;height:11.0px;color:#1c1c1c;font-weight:bold;-webkit-text-stroke:.15px #1c1c1c;width:67.80px;text-align:center;">890909</div>
<div class="cell" style="left:654.00px;top:620.88px;font-size:12.25px;line-height:12.25px;height:14.7px;color:#1c1c1c;">GTA V</div>
<div class="cell" style="left:958.00px;top:620.75px;font-size:12.5px;line-height:12.5px;height:15.0px;color:#1c1c1c;width:118.60px;text-align:right;">1</div>
<div class="cell" style="left:1080.00px;top:620.75px;font-size:12.5px;line-height:12.5px;height:15.0px;color:#1c1c1c;width:118.60px;text-align:right;">35.00</div>
<div class="cell" style="left:1202.00px;top:620.75px;font-size:12.5px;line-height:12.5px;height:15.0px;color:#1c1c1c;width:118.20px;text-align:right;">0</div>
<div class="cell" style="left:1323.60px;top:620.75px;font-size:12.5px;line-height:12.5px;height:15.0px;color:#1c1c1c;width:120.00px;text-align:right;">35.00</div>
<div class="cell" style="left:220.40px;top:643.34px;font-size:9.33px;line-height:9.33px;height:11.2px;color:#1c1c1c;font-weight:bold;-webkit-text-stroke:.15px #1c1c1c;">VIDEOGAMES</div>
<div class="cell" style="left:344.40px;top:643.34px;font-size:9.33px;line-height:9.33px;height:11.2px;color:#1c1c1c;font-weight:bold;-webkit-text-stroke:.15px #1c1c1c;">SHOOTERS</div>
<div class="cell" style="left:583.60px;top:643.40px;font-size:9.2px;line-height:9.2px;height:11.0px;color:#1c1c1c;font-weight:bold;-webkit-text-stroke:.15px #1c1c1c;width:67.80px;text-align:center;">987656</div>
<div class="cell" style="left:654.00px;top:640.88px;font-size:12.25px;line-height:12.25px;height:14.7px;color:#1c1c1c;">BACK 4 BLOOD</div>
<div class="cell" style="left:958.00px;top:641.75px;font-size:12.5px;line-height:12.5px;height:15.0px;color:#1c1c1c;width:118.60px;text-align:right;">1</div>
<div class="cell" style="left:1080.00px;top:641.75px;font-size:12.5px;line-height:12.5px;height:15.0px;color:#1c1c1c;width:118.60px;text-align:right;">40.00</div>
<div class="cell" style="left:1202.00px;top:641.75px;font-size:12.5px;line-height:12.5px;height:15.0px;color:#1c1c1c;width:118.20px;text-align:right;">0</div>
<div class="cell" style="left:1323.60px;top:641.75px;font-size:12.5px;line-height:12.5px;height:15.0px;color:#1c1c1c;width:120.00px;text-align:right;">40.00</div>
<div class="cell" style="left:220.40px;top:664.34px;font-size:9.33px;line-height:9.33px;height:11.2px;color:#1c1c1c;font-weight:bold;-webkit-text-stroke:.15px #1c1c1c;">VIDEOGAMES</div>
<div class="cell" style="left:344.40px;top:664.34px;font-size:9.33px;line-height:9.33px;height:11.2px;color:#1c1c1c;font-weight:bold;-webkit-text-stroke:.15px #1c1c1c;">SHOOTERS</div>
<div class="cell" style="left:583.60px;top:664.40px;font-size:9.2px;line-height:9.2px;height:11.0px;color:#1c1c1c;font-weight:bold;-webkit-text-stroke:.15px #1c1c1c;width:67.80px;text-align:center;">675445</div>
<div class="cell" style="left:654.00px;top:661.88px;font-size:12.25px;line-height:12.25px;height:14.7px;color:#1c1c1c;">RED DEAD REDEMPTION</div>
<div class="cell" style="left:958.00px;top:661.75px;font-size:12.5px;line-height:12.5px;height:15.0px;color:#1c1c1c;width:118.60px;text-align:right;">1</div>
<div class="cell" style="left:1080.00px;top:661.75px;font-size:12.5px;line-height:12.5px;height:15.0px;color:#1c1c1c;width:118.60px;text-align:right;">40.00</div>
<div class="cell" style="left:1202.00px;top:661.75px;font-size:12.5px;line-height:12.5px;height:15.0px;color:#1c1c1c;width:118.20px;text-align:right;">0</div>
<div class="cell" style="left:1323.60px;top:661.75px;font-size:12.5px;line-height:12.5px;height:15.0px;color:#1c1c1c;width:120.00px;text-align:right;">40.00</div>
<div class="cell" style="left:220.40px;top:693.34px;font-size:9.33px;line-height:9.33px;height:11.2px;color:#1c1c1c;font-weight:bold;-webkit-text-stroke:.15px #1c1c1c;">BEAUTY</div>
<div class="cell" style="left:344.40px;top:693.34px;font-size:9.33px;line-height:9.33px;height:11.2px;color:#1c1c1c;font-weight:bold;-webkit-text-stroke:.15px #1c1c1c;">SKINCARE</div>
<div class="cell" style="left:583.60px;top:693.40px;font-size:9.2px;line-height:9.2px;height:11.0px;color:#1c1c1c;font-weight:bold;-webkit-text-stroke:.15px #1c1c1c;width:67.80px;text-align:center;"></div>
<div class="cell" style="left:654.00px;top:682.88px;font-size:12.25px;line-height:12.25px;height:14.7px;color:#1c1c1c;">NEUTROGENA FACIAL CLEANSING MAKEUP REMO</div>
<div class="cell" style="left:654.00px;top:698.88px;font-size:12.25px;line-height:12.25px;height:14.7px;color:#1c1c1c;">VER</div>
<div class="cell" style="left:958.00px;top:690.75px;font-size:12.5px;line-height:12.5px;height:15.0px;color:#1c1c1c;width:118.60px;text-align:right;">1</div>
<div class="cell" style="left:1080.00px;top:690.75px;font-size:12.5px;line-height:12.5px;height:15.0px;color:#1c1c1c;width:118.60px;text-align:right;">22.00</div>
<div class="cell" style="left:1202.00px;top:690.75px;font-size:12.5px;line-height:12.5px;height:15.0px;color:#1c1c1c;width:118.20px;text-align:right;">0</div>
<div class="cell" style="left:1323.60px;top:690.75px;font-size:12.5px;line-height:12.5px;height:15.0px;color:#1c1c1c;width:120.00px;text-align:right;">22.00</div>
<div class="cell" style="left:220.40px;top:721.34px;font-size:9.33px;line-height:9.33px;height:11.2px;color:#1c1c1c;font-weight:bold;-webkit-text-stroke:.15px #1c1c1c;">BEAUTY</div>
<div class="cell" style="left:344.40px;top:721.34px;font-size:9.33px;line-height:9.33px;height:11.2px;color:#1c1c1c;font-weight:bold;-webkit-text-stroke:.15px #1c1c1c;">SKINCARE</div>
<div class="cell" style="left:583.60px;top:721.40px;font-size:9.2px;line-height:9.2px;height:11.0px;color:#1c1c1c;font-weight:bold;-webkit-text-stroke:.15px #1c1c1c;width:67.80px;text-align:center;"></div>
<div class="cell" style="left:654.00px;top:718.88px;font-size:12.25px;line-height:12.25px;height:14.7px;color:#1c1c1c;">CERAVE PM FACIAL MOISTURIZING LOTION</div>
<div class="cell" style="left:958.00px;top:718.75px;font-size:12.5px;line-height:12.5px;height:15.0px;color:#1c1c1c;width:118.60px;text-align:right;">1</div>
<div class="cell" style="left:1080.00px;top:718.75px;font-size:12.5px;line-height:12.5px;height:15.0px;color:#1c1c1c;width:118.60px;text-align:right;">27.50</div>
<div class="cell" style="left:1202.00px;top:718.75px;font-size:12.5px;line-height:12.5px;height:15.0px;color:#1c1c1c;width:118.20px;text-align:right;">0</div>
<div class="cell" style="left:1323.60px;top:718.75px;font-size:12.5px;line-height:12.5px;height:15.0px;color:#1c1c1c;width:120.00px;text-align:right;">27.50</div>
<div class="hl" style="top:178.5px"></div>
<div class="hl" style="top:200.0px"></div>
<div class="hl" style="top:227.9px"></div>
<div class="hl" style="top:255.9px"></div>
<div class="hl" style="top:284.5px"></div>
<div class="hl" style="top:312.5px"></div>
<div class="hl" style="top:340.5px"></div>
<div class="hl" style="top:368.5px"></div>
<div class="hl" style="top:389.5px"></div>
<div class="hl" style="top:410.5px"></div>
<div class="hl" style="top:431.1px"></div>
<div class="hl" style="top:451.9px"></div>
<div class="hl" style="top:479.9px"></div>
<div class="hl" style="top:500.5px"></div>
<div class="hl" style="top:537.5px"></div>
<div class="hl" style="top:565.5px"></div>
<div class="hl" style="top:593.9px"></div>
<div class="hl" style="top:615.0px"></div>
<div class="hl" style="top:635.9px"></div>
<div class="hl" style="top:656.7px"></div>
<div class="hl" style="top:677.1px"></div>
<div class="hl" style="top:713.7px"></div>
<div class="vl" style="left:339.9px"></div>
<div class="vl" style="left:461.1px"></div>
<div class="vl" style="left:583.1px"></div>
<div class="vl" style="left:650.9px"></div>
<div class="vl" style="left:957.5px"></div>
<div class="vl" style="left:1079.5px"></div>
<div class="vl" style="left:1201.5px"></div>
<div class="vl" style="left:1323.1px"></div>
<div class="vl" style="left:1446.5px"></div>
<div class="a" style="left:1446.800px;top:150.600px;width:18.500px;height:583px;background:#F2F1F8"></div>
<div class="a" style="left:1447.200px;top:184.100px;width:17.500px;height:353px;background:#C9C9CC;border-left:1.500px solid #8C8C8C;border-top:1px solid #8C8C8C;border-right:1px solid #B0B0B0"></div>
<svg class="a" style="left:1447px;top:151px" width="18" height="583" viewBox="0 0 18 583" fill="none" stroke="#9A99E2" stroke-width="3.400" stroke-linejoin="miter"><path d="M4.100 24.700l5.200-5.400 5.200 5.400"/><path d="M4.100 557.300l5.200 5.300 5.200-5.300"/></svg>
<div class="a" style="left:341px;top:149.600px;width:169px;height:482.800px;background:#D3201F"></div>
<div class="a" style="left:346.200px;top:155px;width:158.800px;height:472px;background:#F8F8F8"></div>
<div class="a" style="left:346.200px;top:156px;width:158.800px;height:15.600px;background:#2A9ADB"></div>
<div class="dd" style="top:156.60px;color:#D8F3FF;transform-origin:0 50%;transform:scaleX(0.900)">::CAT::</div>
<div class="dd" style="top:172.22px;transform-origin:0 50%;transform:scaleX(0.950)">BOOKS</div>
<div class="dd" style="top:187.84px;transform-origin:0 50%;transform:scaleX(0.937)">SHOOTERS</div>
<div class="dd" style="top:203.46px;transform-origin:0 50%;transform:scaleX(0.919)">VAPE</div>
<div class="dd" style="top:219.08px;transform-origin:0 50%;transform:scaleX(0.880)">JEANS</div>
<div class="dd" style="top:234.70px;transform-origin:0 50%;transform:scaleX(0.982)">IMPORTED</div>
<div class="dd" style="top:250.32px;transform-origin:0 50%;transform:scaleX(0.959)">TV</div>
<div class="dd" style="top:265.94px;transform-origin:0 50%;transform:scaleX(0.935)">LIPSTICK</div>
<div class="dd" style="top:281.56px;transform-origin:0 50%;transform:scaleX(0.897)">BEVERAGES</div>
<div class="dd" style="top:297.18px;transform-origin:0 50%;transform:scaleX(0.952)">COMICS</div>
<div class="dd" style="top:312.80px;transform-origin:0 50%;transform:scaleX(0.911)">RPG</div>
<div class="dd" style="top:328.42px;transform-origin:0 50%;transform:scaleX(0.913)">CIGARETTES</div>
<div class="dd" style="top:344.04px;transform-origin:0 50%;transform:scaleX(0.972)">TSHIRTS</div>
<div class="dd" style="top:359.66px;transform-origin:0 50%;transform:scaleX(1.034)">[empty]</div>
<div class="dd" style="top:375.28px;transform-origin:0 50%;transform:scaleX(0.948)">COMPUTERS</div>
<div class="dd" style="top:390.90px;transform-origin:0 50%;transform:scaleX(0.919)">LIP GLOSS</div>
<div class="dd" style="top:406.52px;transform-origin:0 50%;transform:scaleX(0.920)">SNACKS</div>
<div class="dd" style="top:422.14px;transform-origin:0 50%;transform:scaleX(0.932)">NEWSPAPERS</div>
<div class="dd" style="top:437.76px;transform-origin:0 50%;transform:scaleX(0.985)">MOBA</div>
<div class="dd" style="top:453.38px;transform-origin:0 50%;transform:scaleX(0.994)">THC GUMMIES</div>
<div class="dd" style="top:469.00px;transform-origin:0 50%;transform:scaleX(0.888)">DRESS</div>
<div class="dd" style="top:484.62px;transform-origin:0 50%;transform:scaleX(1.034)">[empty]</div>
<div class="dd" style="top:500.24px;transform-origin:0 50%;transform:scaleX(0.897)">CELLPHONES</div>
<div class="dd" style="top:515.86px;transform-origin:0 50%;transform:scaleX(0.931)">EYESHADOW PALETTES</div>
<div class="dd" style="top:531.48px;transform-origin:0 50%;transform:scaleX(0.958)">FRUITS</div>
<div class="dd" style="top:547.10px;transform-origin:0 50%;transform:scaleX(0.984)">DVDS</div>
<div class="dd" style="top:562.72px;transform-origin:0 50%;transform:scaleX(0.946)">MASCARA</div>
<div class="dd" style="top:578.34px;transform-origin:0 50%;transform:scaleX(0.904)">VEGETABLES</div>
<div class="dd" style="top:593.96px;transform-origin:0 50%;transform:scaleX(0.946)">BLUSH</div>
<div class="dd" style="top:609.58px;transform-origin:0 50%;transform:scaleX(0.930)">SKINCARE</div>
</body></html>
